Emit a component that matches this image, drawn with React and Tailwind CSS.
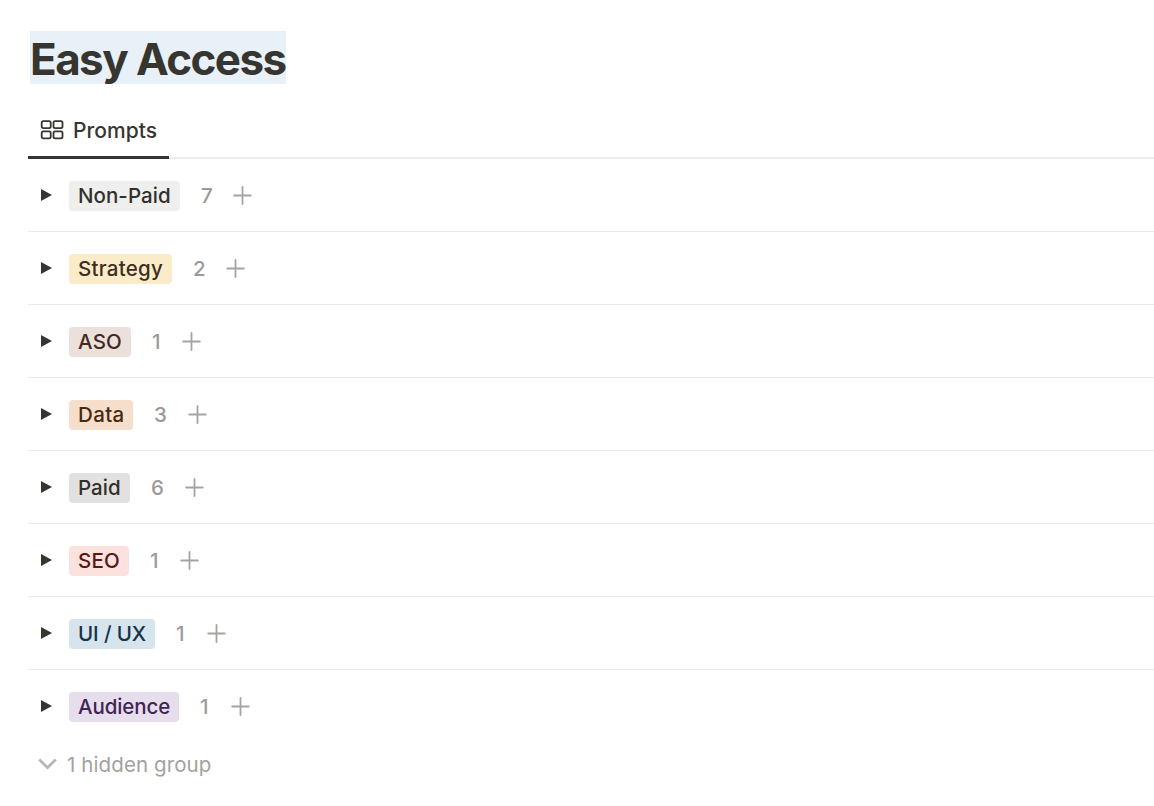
import { useState } from 'react';

const groups = [
  { name: 'Non-Paid', count: 7, tag: 'w-[111px] tracking-[0.05px] bg-[#efefee] text-[#32302c]', countWidth: 'w-8' },
  { name: 'Strategy', count: 2, tag: 'w-[103px] tracking-[0.25px] bg-[#faecc9] text-[#402c1b]', countWidth: 'w-[33px]' },
  { name: 'ASO', count: 1, tag: 'w-[62px] tracking-[0.2px] bg-[#ebe0db] text-[#442a1e]', countWidth: 'w-[30px]' },
  { name: 'Data', count: 3, tag: 'w-[64px] tracking-[0.35px] bg-[#f6decc] text-[#49290e]', countWidth: 'w-[34px]' },
  { name: 'Paid', count: 6, tag: 'w-[61px] tracking-[0.05px] bg-[#e2e1df] text-[#32302c]', countWidth: 'w-[34px]' },
  { name: 'SEO', count: 1, tag: 'w-[60px] tracking-[0.2px] bg-[#fbe2de] text-[#5d1715]', countWidth: 'w-[30px]' },
  { name: 'UI / UX', count: 1, tag: 'w-[86px] tracking-[-0.1px] bg-[#d5e4ed] text-[#183347]', countWidth: 'w-[31px]' },
  { name: 'Audience', count: 1, tag: 'w-[110px] tracking-[-0.1px] bg-[#e7deed] text-[#412454]', countWidth: 'w-[31px]' },
];

export default function App() {
  const [open, setOpen] = useState({});

  return (
    <div className="h-[806px] overflow-hidden bg-white pl-7 pt-[31px] font-[Inter,sans-serif] text-[#37352f]">
      <h1 className="ml-0.5 h-[53px] w-64 whitespace-nowrap bg-[#e8f1f7] text-[44px] font-bold leading-[57px] tracking-[-1.58px]">
        Easy Access
      </h1>

      <div className="mt-[19px] flex h-14 border-b-2 border-[#ececeb]">
        <button className="-mb-0.5 flex h-14 w-[141px] items-start border-b-3 border-[#37352f] pl-3 pt-[17px]">
          <GalleryIcon />
          <span className="ml-[9px] mt-[-4px] whitespace-nowrap text-[21px] font-medium leading-[30px] tracking-[0.05px]">Prompts</span>
        </button>
      </div>

      <div>
        {groups.map(group => (
          <GroupRow key={group.name} group={group} open={open[group.name]}
            onToggle={() => setOpen({ ...open, [group.name]: !open[group.name] })} />
        ))}
      </div>

      <button className="-mt-px flex h-[44px] items-center pl-[10px] text-[#a3a29e]">
        <svg width="19" height="12" viewBox="0 0 19 12" fill="none" stroke="#b9b8b5" strokeWidth="2.8">
          <path d="M1.2 1.5 9.5 9.6 17.8 1.5" />
        </svg>
        <span className="ml-[10px] mt-0.5 whitespace-nowrap text-[20.5px] leading-[30px] tracking-[0.1px]">1 hidden group</span>
      </button>
    </div>
  );
}

function GroupRow({ group, open, onToggle }) {
  return (
    <div className="flex h-[73px] items-center border-b border-[#e9e9e8] pl-[13px] last:border-transparent">
      <button onClick={onToggle} className="w-7">
        <svg width="11" height="12" viewBox="0 0 11 12" fill="#37352f" className={open ? 'rotate-90' : ''}>
          <path d="M0 0 11 6 0 12Z" />
        </svg>
      </button>
      <span className={`mt-0.5 h-[30px] shrink-0 whitespace-nowrap rounded-[4px] pl-[9px] text-[20.5px] font-medium leading-[30px] ${group.tag}`}>
        {group.name}
      </span>
      <span className={`ml-[21px] mt-0.5 text-[20.5px] font-medium leading-[30px] text-[#9b9a97] ${group.countWidth}`}>{group.count}</span>
      <button>
        <svg width="19" height="19" viewBox="0 0 19 19" fill="none" stroke="#a5a4a0" strokeWidth="1.8" strokeLinecap="round">
          <path d="M9.5 1V18M1.2 9.5H17.8" />
        </svg>
      </button>
    </div>
  );
}

function GalleryIcon() {
  return (
    <svg width="24" height="20" viewBox="0 0 24 20" fill="none" stroke="#37352f" strokeWidth="1.8">
      <rect x="1.7" y="1.2" width="9" height="7" rx="1.6" />
      <rect x="13.5" y="1.2" width="9" height="7" rx="1.6" />
      <rect x="1.7" y="11.4" width="9" height="7" rx="1.6" />
      <rect x="13.5" y="11.4" width="9" height="7" rx="1.6" />
    </svg>
  );
}
